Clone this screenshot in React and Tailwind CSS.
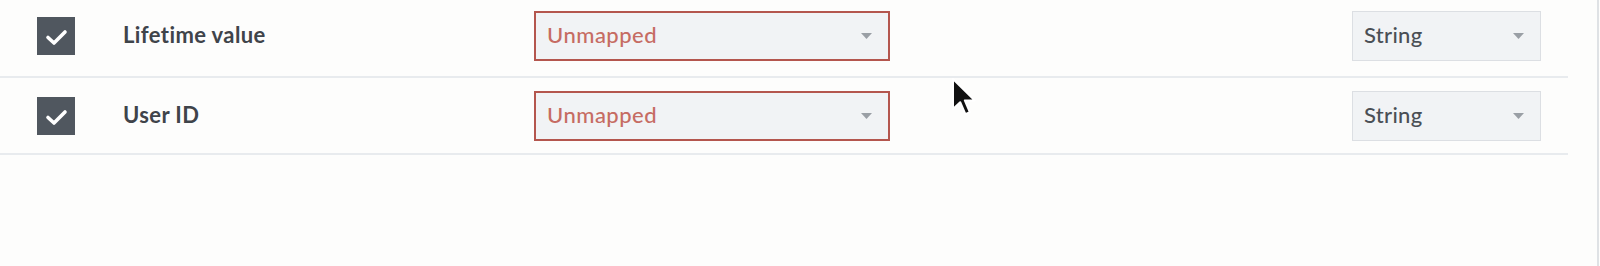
import React from "react";

function Caret() {
  return (
    <svg width="11" height="6" viewBox="0 0 11 6" className="shrink-0">
      <path d="M0 0 L11 0 L5.5 6 Z" fill="#9a9fa5" />
    </svg>
  );
}

function Check() {
  return (
    <svg width="38" height="38" viewBox="0 0 38 38" className="shrink-0">
      <rect width="38" height="38" fill="#50575f" />
      <path
        d="M11 20.5 L17 26 L28 15"
        fill="none"
        stroke="#ffffff"
        strokeWidth="3.6"
        strokeLinecap="round"
        strokeLinejoin="round"
      />
    </svg>
  );
}

function Row({ label, first }) {
  return (
    <div
      className={
        first
          ? "flex items-center border-b-2 border-[#e8ebee] pl-[37px] pr-[27px] pt-[11px] pb-[15px]"
          : "flex items-center border-b-2 border-[#e8ebee] pl-[37px] pr-[27px] pt-[13px] pb-[12px]"
      }
    >
      <Check />
      <div className="ml-[48px] w-[411px] pb-[3px] text-[22px] font-bold tracking-[0.4px] text-[#3f444a]">
        {label}
      </div>
      <div className="flex h-[50px] w-[356px] items-center justify-between border-2 border-[#b4564e] bg-[#f1f3f5] pl-[11px] pr-[16px]">
        <span className="pb-[3px] text-[22px] font-medium tracking-[0.5px] text-[#c66c63]">
          Unmapped
        </span>
        <Caret />
      </div>
      <div className="flex-1" />
      <div className="flex h-[50px] w-[189px] items-center justify-between border border-[#dcdfe3] bg-[#f1f3f5] pl-[11px] pr-[16px]">
        <span className="pb-[3px] text-[22px] font-medium tracking-[0.3px] text-[#4a4f55]">
          String
        </span>
        <Caret />
      </div>
    </div>
  );
}

export default function App() {
  return (
    <div
      className="relative h-[266px] w-[1600px] overflow-hidden bg-[#fdfdfc]"
      style={{ fontFamily: "Lato, 'Open Sans', sans-serif" }}
    >
      <div className="h-full w-[1599px] border-r-2 border-[#dfe2e5]">
        <div className="w-[1568px]">
          <Row label="Lifetime value" first />
          <Row label="User ID" />
        </div>
      </div>

      {/* mouse pointer */}
      <svg
        className="absolute left-[951px] top-[77px]"
        width="28"
        height="42"
        viewBox="0 0 14 21"
      >
        <path
          d="M1 1 L1 16 L4.6 12.6 L7.2 18.6 L9.4 17.6 L6.9 11.7 L11.8 11.7 Z"
          fill="#111"
          stroke="#fff"
          strokeWidth="1"
          strokeLinejoin="round"
        />
      </svg>
    </div>
  );
}
